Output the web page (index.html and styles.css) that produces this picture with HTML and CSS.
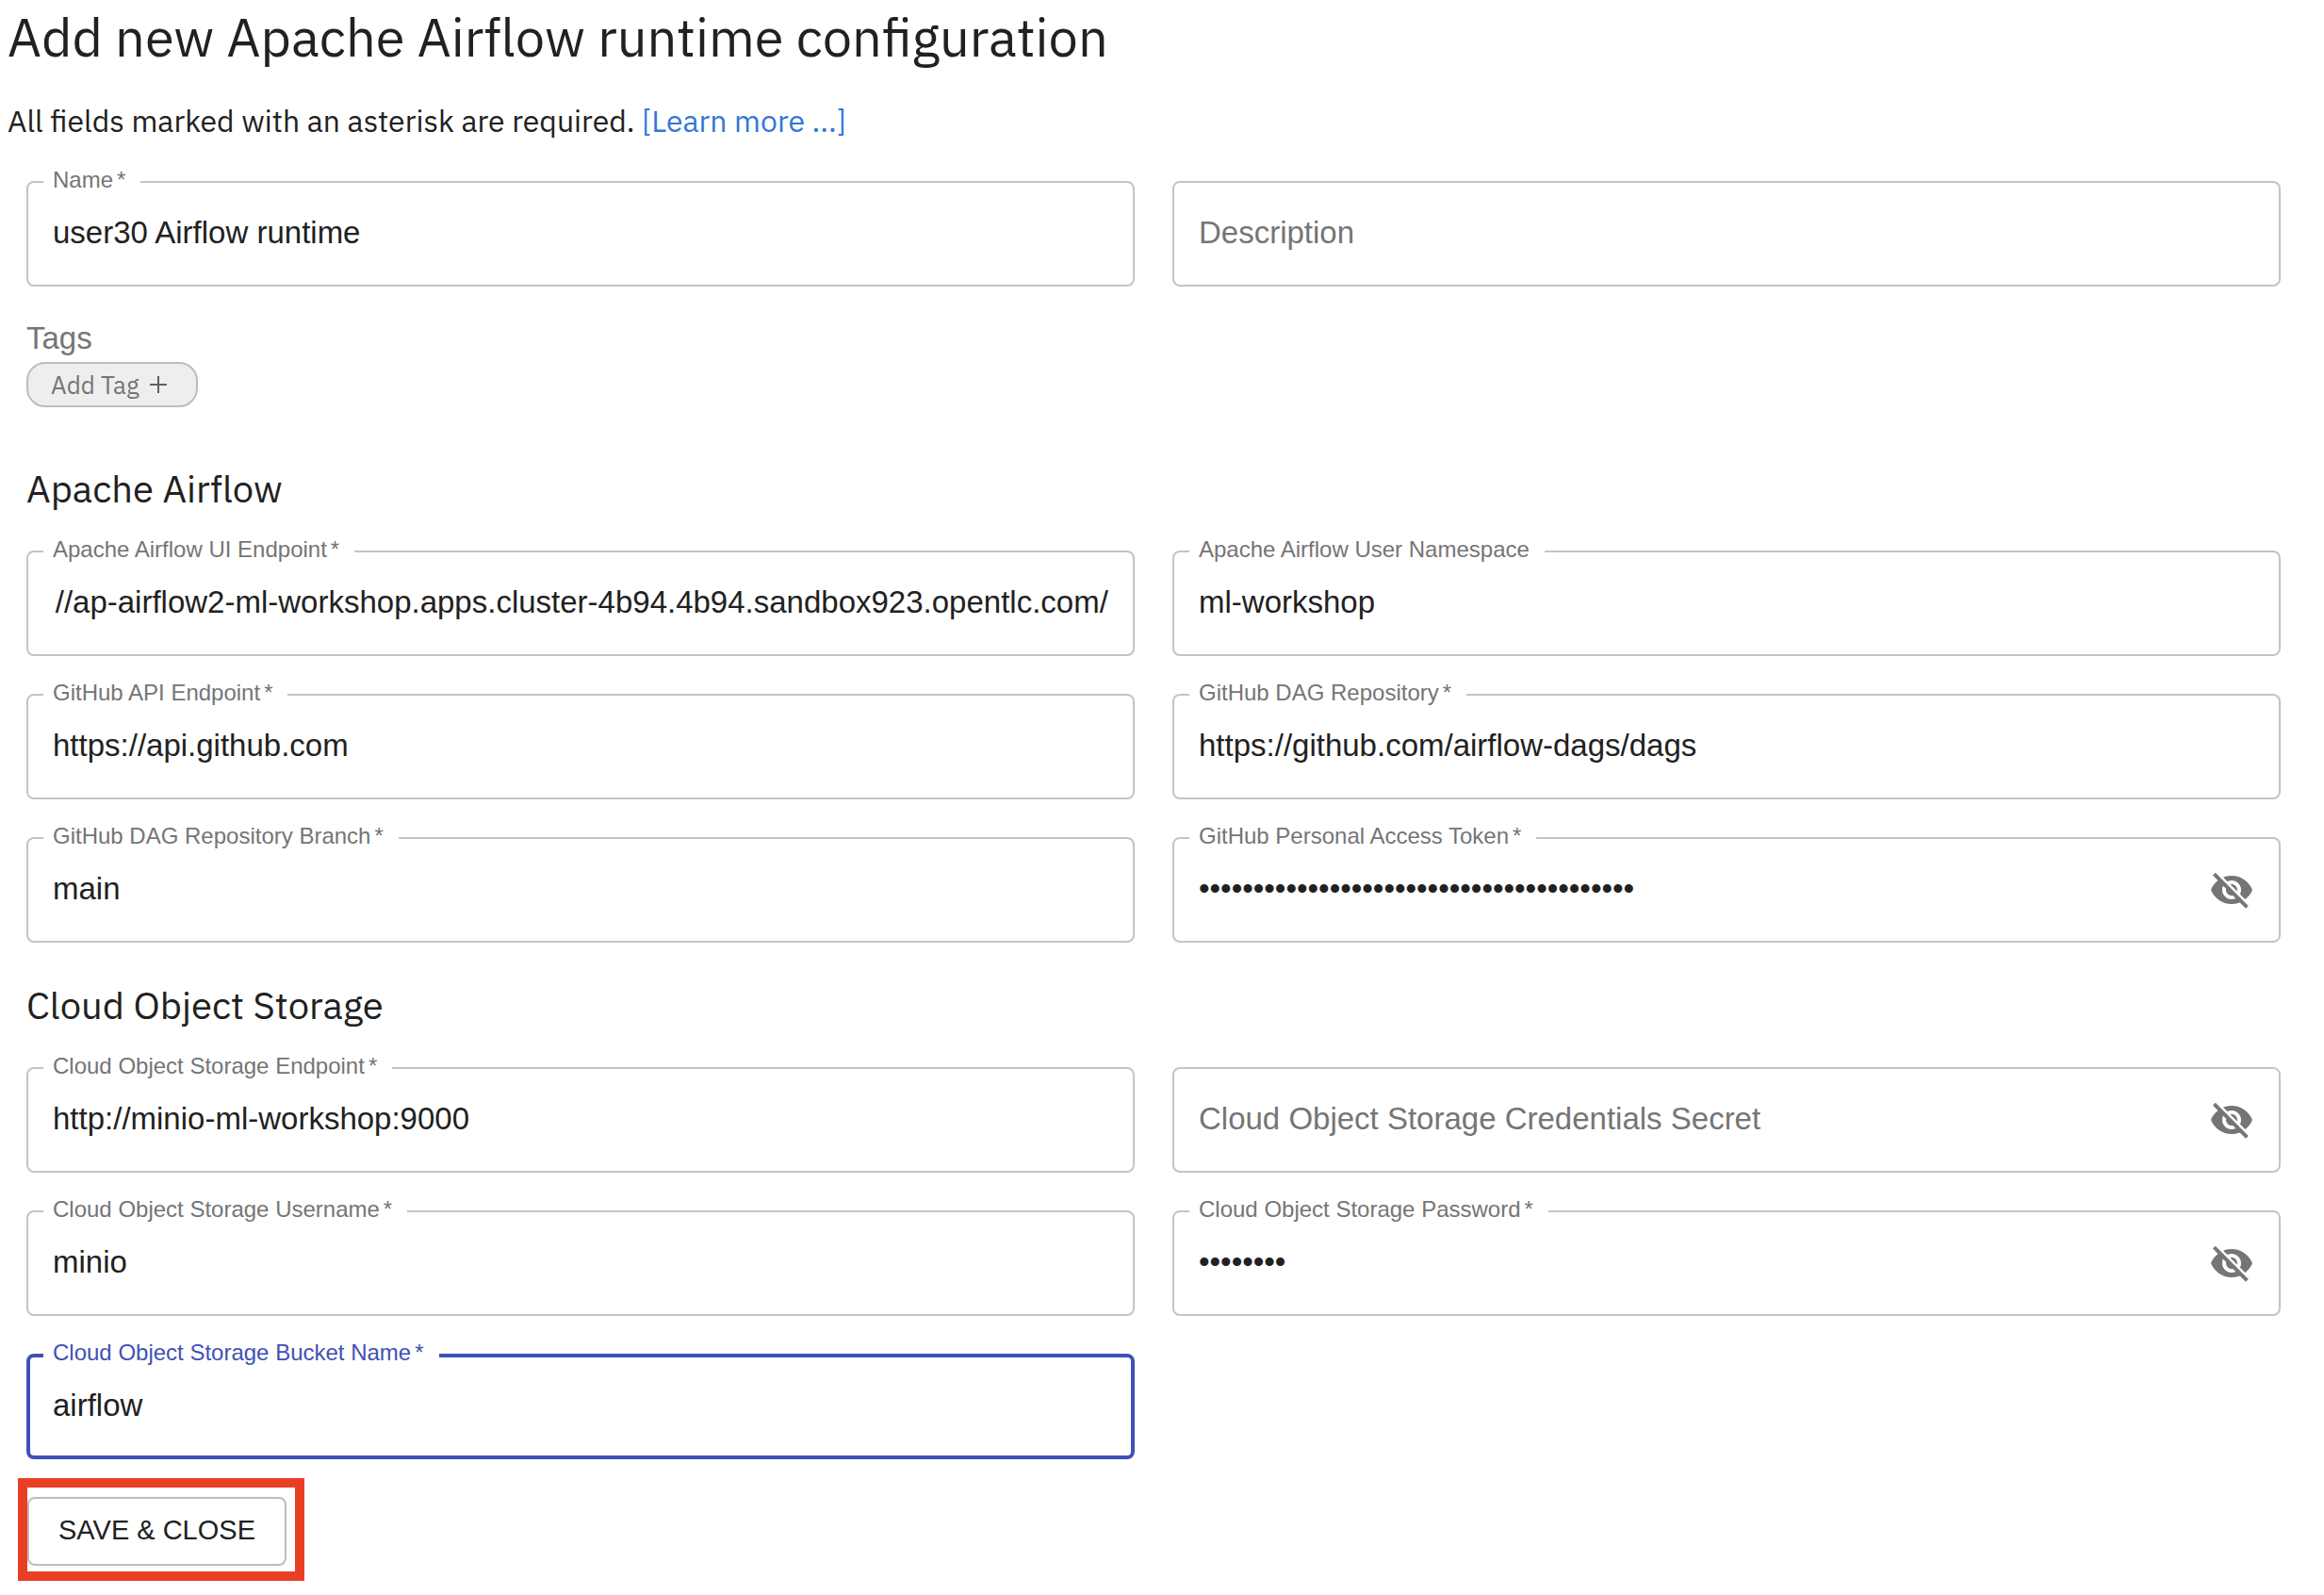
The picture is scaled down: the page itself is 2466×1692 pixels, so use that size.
FILE: index.html
```html
<!DOCTYPE html>
<html lang="en">
<head>
<meta charset="utf-8">
<title>Add new Apache Airflow runtime configuration</title>
<link rel="stylesheet" href="styles.css">
</head>
<body>
<svg class="sprite" aria-hidden="true">
  <symbol id="eye-off" viewBox="0 0 24 24">
    <mask id="slash-gap">
      <rect width="24" height="24" fill="#fff"/>
      <path d="M3 2.200 21.600 20.800" stroke="#000" stroke-width="1.900"/>
    </mask>
    <path mask="url(#slash-gap)" fill="currentColor" d="M12 4.500C7 4.500 2.730 7.610 1 12c1.730 4.390 6 7.500 11 7.500s9.270-3.110 11-7.500c-1.730-4.390-6-7.500-11-7.500zM12 17c-2.760 0-5-2.240-5-5s2.240-5 5-5 5 2.240 5 5-2.240 5-5 5zm0-8c-1.660 0-3 1.340-3 3s1.340 3 3 3 3-1.340 3-3-1.340-3-3-3z"/>
    <path d="M2.700 3.600 20.200 21.200" stroke="currentColor" stroke-width="2"/>
  </symbol>
</svg>
<main class="page">
  <h1 class="title">Add new Apache Airflow runtime configuration</h1>
  <p class="intro">All fields marked with an asterisk are required. <a class="link" href="#help">[Learn more ...]</a></p>
  <form class="form" id="runtime-form">
    <div class="grid">
      <div class="field">
        <label class="label" for="name">Name<span class="star">*</span></label>
        <input class="input" id="name" type="text" value="user30 Airflow runtime">
      </div>
      <div class="field">
        <input class="input" type="text" aria-label="Description" placeholder="Description">
      </div>
    </div>

    <div class="tags">
      <span class="tags-label">Tags</span>
      <button class="chip" type="button">Add Tag
        <svg class="plus" viewBox="0 0 20 20" aria-hidden="true"><path d="M10 1v18M1 10h18" stroke="currentColor" stroke-width="2"/></svg>
      </button>
    </div>

    <h2 class="section">Apache Airflow</h2>
    <div class="grid">
      <div class="field">
        <label class="label" for="endpoint">Apache Airflow UI Endpoint<span class="star">*</span></label>
        <input class="input" id="endpoint" type="text" value="https://ap-airflow2-ml-workshop.apps.cluster-4b94.4b94.sandbox923.opentlc.com/">
      </div>
      <div class="field">
        <label class="label" for="namespace">Apache Airflow User Namespace</label>
        <input class="input" id="namespace" type="text" value="ml-workshop">
      </div>
      <div class="field">
        <label class="label" for="api">GitHub API Endpoint<span class="star">*</span></label>
        <input class="input" id="api" type="text" value="https://api.github.com">
      </div>
      <div class="field">
        <label class="label" for="repo">GitHub DAG Repository<span class="star">*</span></label>
        <input class="input" id="repo" type="text" value="https://github.com/airflow-dags/dags">
      </div>
      <div class="field">
        <label class="label" for="branch">GitHub DAG Repository Branch<span class="star">*</span></label>
        <input class="input" id="branch" type="text" value="main">
      </div>
      <div class="field">
        <label class="label" for="token">GitHub Personal Access Token<span class="star">*</span></label>
        <input class="input" id="token" type="password" value="0123456789012345678901234567890123456789">
        <button class="toggle" type="button" aria-label="Show token"><svg class="eye"><use href="#eye-off"/></svg></button>
      </div>
    </div>

    <h2 class="section section-next">Cloud Object Storage</h2>
    <div class="grid">
      <div class="field">
        <label class="label" for="cos-endpoint">Cloud Object Storage Endpoint<span class="star">*</span></label>
        <input class="input" id="cos-endpoint" type="text" value="http://minio-ml-workshop:9000">
      </div>
      <div class="field">
        <input class="input" type="password" aria-label="Cloud Object Storage Credentials Secret" placeholder="Cloud Object Storage Credentials Secret">
        <button class="toggle" type="button" aria-label="Show secret"><svg class="eye"><use href="#eye-off"/></svg></button>
      </div>
      <div class="field">
        <label class="label" for="cos-user">Cloud Object Storage Username<span class="star">*</span></label>
        <input class="input" id="cos-user" type="text" value="minio">
      </div>
      <div class="field">
        <label class="label" for="cos-pass">Cloud Object Storage Password<span class="star">*</span></label>
        <input class="input" id="cos-pass" type="password" value="minio123">
        <button class="toggle" type="button" aria-label="Show password"><svg class="eye"><use href="#eye-off"/></svg></button>
      </div>
      <div class="field field-active">
        <label class="label" for="bucket">Cloud Object Storage Bucket Name<span class="star">*</span></label>
        <input class="input" id="bucket" type="text" value="airflow">
      </div>
    </div>
  </form>
  <div class="highlight">
    <button class="save" type="submit" form="runtime-form">SAVE &amp; CLOSE</button>
  </div>
</main>
<script src="script.js"></script>
</body>
</html>
```
FILE: styles.css
```css
* {
  box-sizing: border-box;
}

body {
  margin: 0;
  background: #fff;
  color: #212121;
  font-family: "Liberation Sans", Arial, sans-serif;
  font-size: 33px;
}

.sprite {
  position: absolute;
  width: 0;
  height: 0;
}

.page {
  padding: 0 8px;
}

.title,
.intro,
.section,
.chip {
  font-family: "IBM Plex Sans", Roboto, sans-serif;
  font-weight: 400;
}

.title {
  margin: 0;
  font-size: 56px;
  line-height: 78px;
}

.intro {
  margin: 28px 0 0;
  font-size: 32px;
  line-height: 44px;
}

.link {
  color: #3478d8;
  text-decoration: none;
}

.form {
  padding: 42px 38px 0 20px;
}

.grid {
  display: grid;
  grid-template-columns: repeat(2, minmax(0, 1fr));
  gap: 40px;
}

.field {
  position: relative;
  display: flex;
  align-items: center;
  height: 112px;
  border: 2px solid #c4c4c4;
  border-radius: 8px;
}

.label {
  position: absolute;
  top: -19px;
  left: 16px;
  padding: 0 16px 0 10px;
  background: #fff;
  color: #757575;
  font-size: 24px;
  line-height: 32px;
  white-space: nowrap;
}

.star {
  padding-left: 4px;
}

.input {
  flex: 1;
  min-width: 0;
  height: 100%;
  margin: 0 26px;
  padding: 0 0 2px;
  border: 0;
  outline: 0;
  background: none;
  color: inherit;
  font: inherit;
}

.input::placeholder {
  color: #757575;
  opacity: 1;
}

.toggle {
  display: flex;
  margin-right: 26px;
  padding: 0;
  border: 0;
  background: none;
  color: #757575;
}

.eye {
  width: 48px;
  height: 48px;
}

.field-active {
  border: 4px solid #3f51b5;
}

.field-active .label {
  top: -21px;
  left: 14px;
  color: #3f51b5;
}

.field-active .input {
  margin: 0 24px;
}

.tags {
  display: flex;
  flex-direction: column;
  align-items: flex-start;
  margin-top: 34px;
  color: #757575;
}

.tags-label {
  line-height: 42px;
}

.chip {
  display: flex;
  align-items: center;
  gap: 10px;
  height: 48px;
  margin-top: 4px;
  padding: 0 30px 0 24px;
  border: 2px solid #bdbdbd;
  border-radius: 20px;
  background: #eee;
  color: #757575;
  font-size: 26px;
}

.plus {
  width: 20px;
  height: 20px;
  color: #616161;
}

.section {
  margin: 58px 0 38px;
  font-size: 40px;
  line-height: 56px;
}

.section-next {
  margin-top: 38px;
}

.highlight {
  width: max-content;
  margin: 20px 0 0 11px;
  padding: 10px 9px 6px 0;
  border: 10px solid #eb3f25;
}

.save {
  display: block;
  height: 73px;
  padding: 0 31px 2px;
  border: 2px solid #bdbdbd;
  border-radius: 8px;
  background: #fff;
  color: #212121;
  font: inherit;
  font-size: 29px;
}
```
FILE: script.js
```js
// Long endpoint addresses are shown from their end.
const endpoint = document.getElementById("endpoint");
endpoint.scrollLeft = endpoint.scrollWidth;
```
